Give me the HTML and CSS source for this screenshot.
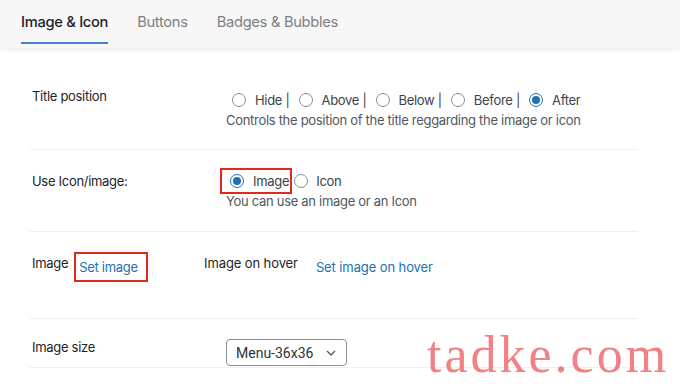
FILE: index.html
```html
<!DOCTYPE html>
<html lang="en">
<head>
  <meta charset="UTF-8" />
  <meta name="viewport" content="width=device-width, initial-scale=1.0"/>
  <title>Image &amp; Icon</title>
  <link rel="stylesheet" href="styles.css">
</head>
<body>

  <nav class="tabs">
    <a href="#" class="tab active">Image &amp; Icon</a>
    <a href="#" class="tab">Buttons</a>
    <a href="#" class="tab">Badges &amp; Bubbles</a>
  </nav>

  <div class="settings">

    <div class="row row-position">
      <div class="row-label">Title position</div>
      <div class="row-field">
        <div class="options">
          <label class="option"><input type="radio" name="title_pos" /> Hide |</label>
          <label class="option"><input type="radio" name="title_pos" /> Above |</label>
          <label class="option"><input type="radio" name="title_pos" /> Below |</label>
          <label class="option"><input type="radio" name="title_pos" /> Before |</label>
          <label class="option"><input type="radio" name="title_pos" checked /> After</label>
        </div>
        <p class="hint">Controls the position of the title reggarding the image or icon</p>
      </div>
    </div>

    <div class="row row-type">
      <div class="row-label">Use Icon/image:</div>
      <div class="row-field">
        <div class="options">
          <label class="option highlight"><input type="radio" name="use_type" checked /> Image</label>
          <label class="option option-icon"><input type="radio" name="use_type" /> Icon</label>
        </div>
        <p class="hint">You can use an image or an Icon</p>
      </div>
    </div>

    <div class="row row-image">
      <div class="image-group">
        <span class="group-label">Image</span>
        <a href="#" class="link highlight">Set image</a>
      </div>
      <div class="image-group hover-group">
        <span class="group-label">Image on hover</span>
        <a href="#" class="link">Set image on hover</a>
      </div>
    </div>

    <div class="row row-size">
      <div class="row-label">Image size</div>
      <div class="row-field">
        <div class="select-box">
          <span>Menu-36x36</span>
          <svg width="10" height="6" viewBox="0 0 10 6"><path d="M1 1l4 4 4-4" fill="none" stroke="#50575e" stroke-width="1.3"/></svg>
        </div>
      </div>
    </div>

  </div>

  <div class="watermark">tadke.com</div>

</body>
</html>
```

FILE: styles.css
```css
* { box-sizing: border-box; }

body {
  margin: 0;
  font-family: Inter, 'Noto Sans', sans-serif;
  font-size: 13px;
  letter-spacing: -0.3px;
  color: #1d2327;
  background: #fff;
  overflow: hidden;
  position: relative;
  height: 386px;
}

.tabs {
  height: 48px;
  display: flex;
  gap: 29px;
  padding: 0 21px;
  background: #f7f7f7;
  box-shadow: 0 2px 3px rgba(0, 0, 0, 0.07);
}

.tab {
  padding-top: 12px;
  height: 44px;
  line-height: 20px;
  font-size: 14.7px;
  color: #7c7f84;
  text-decoration: none;
  border-bottom: 2px solid transparent;
}

.tab.active {
  color: #1d2327;
  font-weight: 500;
  border-bottom-color: #4a7fd4;
}

.settings {
  margin: 0 42px 0 30px;
}

.row {
  display: flex;
  padding-left: 2px;
  border-bottom: 1px solid #eeeff0;
  line-height: 20px;
}

.row-label {
  width: 194px;
  flex-shrink: 0;
}

.row-position { padding: 38px 0 19px 2px; }
.row-position .row-field { padding-top: 4px; }

.row-type { padding: 21px 0 20px 2px; }

.options {
  display: flex;
  align-items: center;
  gap: 9px;
  color: #3c434a;
}

.option {
  display: flex;
  align-items: center;
  gap: 9px;
}

.option input {
  appearance: none;
  margin: 0;
  width: 14px;
  height: 14px;
  border: 1px solid #8c8f94;
  border-radius: 50%;
  background: #fff;
  display: grid;
  place-items: center;
}

.option input:checked {
  border-color: #2271b1;
}

.option input:checked::before {
  content: "";
  width: 8px;
  height: 8px;
  border-radius: 50%;
  background: #2271b1;
}

.options .option:first-child input { margin-left: 6px; }

.hint {
  margin: 0;
  color: #50575e;
}

.highlight {
  border: 2px solid #e0291f;
}

.row-type .options { gap: 2px; }

.row-type .option.highlight {
  margin: -3px 0 -3px -6px;
  padding: 1px 1px 1px 2px;
  height: 26px;
}

.row-type .option-icon { gap: 8px; }

.row-image { padding: 21px 0 36px 2px; }

.image-group {
  display: flex;
  align-items: flex-start;
  gap: 6px;
  width: 172px;
  flex-shrink: 0;
}

.group-label { white-space: nowrap; }

.hover-group {
  gap: 18px;
  width: auto;
  letter-spacing: -0.1px;
}

.link {
  color: #2271b1;
  text-decoration: none;
  margin-top: 4px;
  white-space: nowrap;
}

.link.highlight {
  margin-top: -1px;
  padding: 3px 8px 3px 3px;
}

.row-size { padding: 18px 0 1px 2px; }
.row-size .row-field { padding-top: 2px; }

.select-box {
  width: 121px;
  height: 27px;
  display: flex;
  align-items: center;
  justify-content: space-between;
  padding: 0 10px 0 9px;
  border: 1px solid #8c8f94;
  border-radius: 4px;
  font-family: Roboto, sans-serif;
  font-size: 14px;
  letter-spacing: 0;
  color: #2c3338;
}

.watermark {
  position: absolute;
  left: 427px;
  top: 329px;
  font-family: 'Liberation Serif', serif;
  font-size: 52px;
  line-height: 52px;
  letter-spacing: 3px;
  color: #f08285;
}
```
